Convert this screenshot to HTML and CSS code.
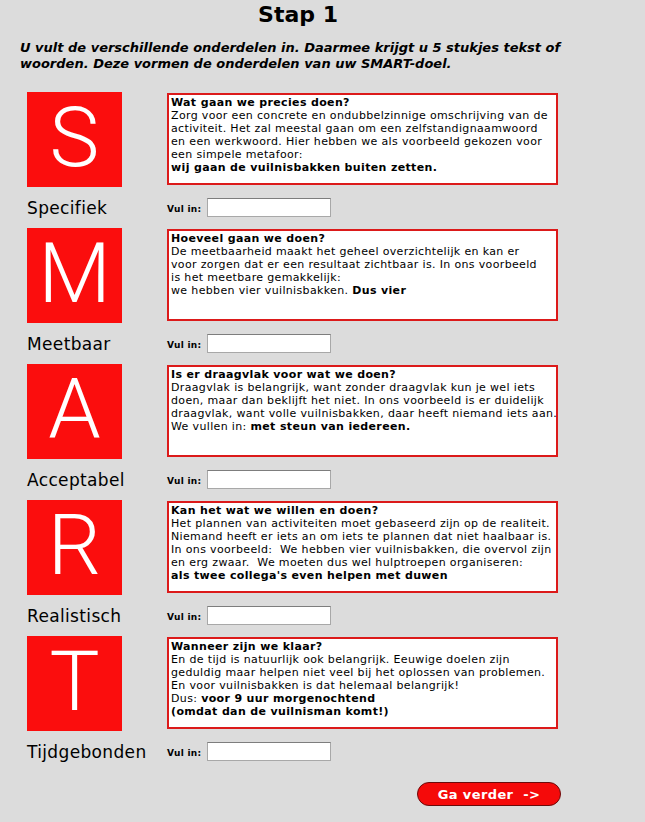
FILE: index.html
```html
<!DOCTYPE html>
<html lang="nl">
<head>
<meta charset="utf-8">
<title>Stap 1</title>
<link rel="stylesheet" href="styles.css">
</head>
<body>
<div class="page">
  <h1 class="title">Stap 1</h1>
  <p class="intro">U vult de verschillende onderdelen in. Daarmee krijgt u 5 stukjes tekst of<br>woorden. Deze vormen de onderdelen van uw SMART-doel.</p>

  <div class="grid">
    <div class="letter">S</div>
    <div class="box"><b>Wat gaan we precies doen?</b><br>Zorg voor een concrete en ondubbelzinnige omschrijving van de<br>activiteit. Het zal meestal gaan om een zelfstandignaamwoord<br>en een werkwoord. Hier hebben we als voorbeeld gekozen voor<br>een simpele metafoor:<br><b>wij gaan de vuilnisbakken buiten zetten.</b></div>
    <div class="label">Specifiek</div>
    <div class="fill"><span class="fill-label">Vul in:</span><input class="field" type="text"></div>

    <div class="letter">M</div>
    <div class="box"><b>Hoeveel gaan we doen?</b><br>De meetbaarheid maakt het geheel overzichtelijk en kan er<br>voor zorgen dat er een resultaat zichtbaar is. In ons voorbeeld<br>is het meetbare gemakkelijk:<br>we hebben vier vuilnisbakken. <b>Dus vier</b></div>
    <div class="label">Meetbaar</div>
    <div class="fill"><span class="fill-label">Vul in:</span><input class="field" type="text"></div>

    <div class="letter">A</div>
    <div class="box"><b>Is er draagvlak voor wat we doen?</b><br>Draagvlak is belangrijk, want zonder draagvlak kun je wel iets<br>doen, maar dan beklijft het niet. In ons voorbeeld is er duidelijk<br>draagvlak, want volle vuilnisbakken, daar heeft niemand iets aan.<br>We vullen in: <b>met steun van iedereen.</b></div>
    <div class="label">Acceptabel</div>
    <div class="fill"><span class="fill-label">Vul in:</span><input class="field" type="text"></div>

    <div class="letter">R</div>
    <div class="box"><b>Kan het wat we willen en doen?</b><br>Het plannen van activiteiten moet gebaseerd zijn op de realiteit.<br>Niemand heeft er iets an om iets te plannen dat niet haalbaar is.<br>In ons voorbeeld:&nbsp; We hebben vier vuilnisbakken, die overvol zijn<br>en erg zwaar.&nbsp; We moeten dus wel hulptroepen organiseren:<br><b>als twee collega's even helpen met duwen</b></div>
    <div class="label">Realistisch</div>
    <div class="fill"><span class="fill-label">Vul in:</span><input class="field" type="text"></div>

    <div class="letter">T</div>
    <div class="box"><b>Wanneer zijn we klaar?</b><br>En de tijd is natuurlijk ook belangrijk. Eeuwige doelen zijn<br>geduldig maar helpen niet veel bij het oplossen van problemen.<br>En voor vuilnisbakken is dat helemaal belangrijk!<br>Dus: <b>voor 9 uur morgenochtend<br>(omdat dan de vuilnisman komt!)</b></div>
    <div class="label">Tijdgebonden</div>
    <div class="fill"><span class="fill-label">Vul in:</span><input class="field" type="text"></div>
  </div>

  <div class="actions">
    <button class="next" type="button">Ga verder&nbsp; -&gt;</button>
  </div>
</div>
</body>
</html>
```

FILE: styles.css
```css
html, body {
  margin: 0;
  padding: 0;
  background: #dcdcdc;
}

body {
  font-family: "DejaVu Sans", Verdana, sans-serif;
  color: #000;
}

.page {
  width: 596px;
}

.title {
  margin: 2px 0 0;
  text-align: center;
  font-size: 22px;
  font-weight: bold;
  line-height: 26px;
}

.intro {
  margin: 12px 0 0;
  padding-left: 20px;
  font-size: 13px;
  font-weight: bold;
  font-style: italic;
  line-height: 16px;
}

.grid {
  margin-top: 20px;
  padding-left: 27px;
  display: grid;
  grid-template-columns: 140px 391px;
  grid-auto-rows: 95px 41px;
}

.letter {
  width: 95px;
  height: 95px;
  background: #fb0d0d;
  color: #fff;
  font-family: Roboto, "Open Sans", sans-serif;
  font-weight: 300;
  font-size: 84px;
  line-height: 84px;
  display: flex;
  align-items: center;
  justify-content: center;
  box-sizing: border-box;
  padding-bottom: 4px;
}

.box {
  margin-top: 1px;
  height: 92px;
  box-sizing: border-box;
  border: 2px solid #dc1a1a;
  background: #fff;
  padding: 1px 1px 1px 2px;
  font-size: 11px;
  letter-spacing: 0.35px;
  line-height: 13px;
  white-space: nowrap;
}

.label {
  align-self: end;
  padding-bottom: 10px;
  font-size: 17px;
  letter-spacing: 0.35px;
  line-height: 20px;
  white-space: nowrap;
}

.fill {
  display: flex;
  align-items: baseline;
  gap: 6px;
  padding-top: 11px;
  box-sizing: border-box;
}

.fill-label {
  font-size: 9px;
  letter-spacing: 0.3px;
  font-weight: bold;
}

.field {
  width: 124px;
  height: 19px;
  box-sizing: border-box;
  margin: 0;
  padding: 1px 3px;
  border: 1px solid #a8a8a8;
  border-top-color: #7d7d7d;
  background: #fff;
  font-family: "DejaVu Sans", sans-serif;
  font-size: 12px;
}

.actions {
  width: 561px;
  display: flex;
  justify-content: flex-end;
  margin-top: 10px;
}

.next {
  width: 144px;
  height: 24px;
  border: 1px solid #6a0b0b;
  border-radius: 12px;
  background: #f50a0a;
  color: #fff;
  font-family: "DejaVu Sans", Verdana, sans-serif;
  font-weight: bold;
  font-size: 13px;
  letter-spacing: 0.4px;
  padding: 0;
  cursor: pointer;
}
```
